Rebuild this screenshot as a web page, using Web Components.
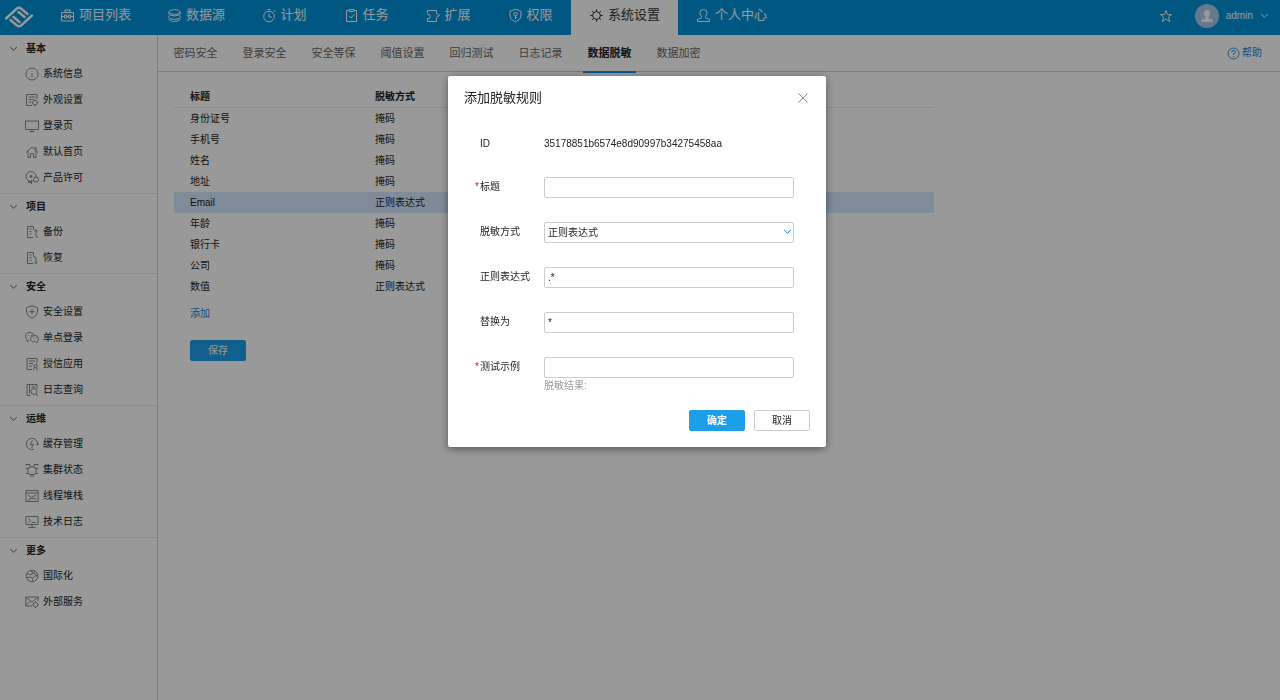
<!DOCTYPE html>
<html lang="zh-CN">
<head>
<meta charset="utf-8">
<title>系统设置 - 数据脱敏</title>
<style>
html,body{margin:0;height:100%}
body{font:10px/20px "Liberation Sans","Noto Sans CJK SC",sans-serif;color:#222;background:#fff}
</style>
</head>
<body>
<settings-page></settings-page>
<script>
const ICONS = {
  logo: ['0 0 30 24', '<g stroke-width="2.400" stroke-linejoin="round" stroke-linecap="round"><path d="M2 13.500L12.800 3.700q2.200-1.900 4.400 0L23.500 9"/><path d="M28 10.500L17.200 20.300q-2.200 1.900-4.400 0L6.500 15"/><path d="M9.500 12l6 5M20.500 12l-6-5"/></g>'],
  projects: ['0 0 15 15', '<path d="M1.500 4.500h12v8.500h-12zM5 4.500V2h5v2.500M1.500 8.500h3m2 0h2m2 0h3M4.500 7v3h2V7zM8.500 7v3h2V7z"/>'],
  database: ['0 0 15 15', '<ellipse cx="7.500" cy="4" rx="5.500" ry="2.300"/><path d="M2 4q-1 2 1 3 4.500 2 9 0 2-1 1-3M2 7.500q-1 2 1 3 4.500 2 9 0 2-1 1-3M2 10.500v1q2 2 5.500 2t5.500-2v-1"/>'],
  clock: ['0 0 15 15', '<circle cx="7" cy="8.500" r="5.300"/><path d="M7 5.500v3.500h3M5.500 1.500h3M11.500 2l2 2"/>'],
  task: ['0 0 15 15', '<path d="M5 2.500H2.500v11h10v-11H10M5 1.500h5v2H5zM5 8l2 2 3.500-4"/>'],
  extend: ['0 0 15 15', '<path d="M1.500 5.500V2.500h9v3l3 2-3 2v4h-9v-3h2q1.500-2 0-4h-2"/>'],
  rights: ['0 0 15 15', '<path d="M7.500 1.200l5.500 2v5q0 3.500-5.500 5.600Q2 11.700 2 8.200v-5z"/><circle cx="7.500" cy="6" r="1.700"/><path d="M7.500 7.700v3.500m0-1.700h1.500"/>'],
  gear: ['0 0 15 15', '<circle cx="7.500" cy="7.500" r="3.900"/><path d="M7.500 1.300v2.300M7.500 11.400v2.300M1.300 7.500h2.300M11.400 7.500h2.300M3.100 3.100l1.600 1.600M10.300 10.300l1.600 1.600M3.100 11.900l1.600-1.600M10.300 4.700l1.600-1.600"/>'],
  person: ['0 0 15 15', '<path d="M5.500 8.500Q4 7 4 4.700 4 1.500 7.500 1.500T11 4.700q0 2.300-1.500 3.800v1.300l4 1.700v2h-12v-2l4-1.700z"/>'],
  star: ['0 0 15 15', '<path d="M7.500 1.500l1.600 4.500h4.400l-3.500 2.700 1.500 4.800-4-2.900-4 2.900L5 8.700 1.500 6h4.400z"/>'],
  down: ['0 0 9 9', '<path d="M1.200 3l3.300 3.300L7.800 3"/>'],
  close: ['0 0 12 12', '<path d="M1.500 1.500l9 9m0-9l-9 9"/>'],
  help: ['0 0 15 15', '<circle cx="7.500" cy="7.500" r="6.300"/><path d="M5.500 6q0-2.200 2-2.200T9.500 6q0 1.300-2 2v1.300M7.500 10.500v1.200"/>'],
  info: ['0 0 14 14', '<circle cx="7" cy="7" r="6"/><path d="M7 6v4.500M7 3.500v1.200"/>'],
  look: ['0 0 14 14', '<path d="M7 12.500H1.500v-11h10.500V6M3.500 4h7M3.500 6.500h5M3.500 9h3"/><circle cx="10" cy="9.700" r="2.300"/><path d="M10 6.500v1M10 12v1.200M7 9.700h.8M12.300 9.700h1"/>'],
  screen: ['0 0 14 14', '<path d="M.5 2h13v8.500H.5zM7 10.500v2M4.500 12.500h5"/>'],
  home: ['0 0 14 14', '<path d="M1 7.500l6-5.500 6 5.500M3 6v6.500h2.500V8.500h3v4H11V6M11 5.500V2.500H9.500"/>'],
  license: ['0 0 14 14', '<circle cx="6" cy="5.500" r="5"/><circle cx="6" cy="5.500" r="1" fill="currentColor"/><circle cx="11" cy="8.500" r="2.500" fill="#fff"/><path d="M3.500 10v1.500h3M6.500 9v4"/>'],
  backup: ['0 0 14 14', '<path d="M8.500 5V1.500h-6v11h6M4.500 4h2M4.500 6.500h2M4.500 9h2M9.500 6.500l1.500-2 1.500 2M11 5v6q0 1.500 2 1.500"/>'],
  restore: ['0 0 14 14', '<path d="M8.500 5V1.500h-6v11h6M4.500 4h2M4.500 6.500h2M4.500 9h2M8.500 5.500q2.500 0 2.500 2v5M9.500 11l1.500 1.700L12.500 11"/>'],
  shield: ['0 0 14 14', '<path d="M7 .8l5.500 1.700V7q0 4-5.500 6.200Q1.500 11 1.500 7V2.500zM7 4v5.500M4.200 6.700h5.600"/>'],
  wechat: ['0 0 14 14', '<path d="M4 9.500l-2 1V8.500Q.5 7 .5 5.200q0-3.700 4.200-3.700 3.500 0 4.300 3M3.500 4.500h.7M6 4.500h.7"/><path d="M9.500 4.500q4 0 4 3.200 0 1.700-1.300 2.500v1.500l-1.500-.9q-5 .7-5.200-3.100 0-3.200 4-3.200M8 7h.7M10.500 7h.7"/>'],
  trust: ['0 0 14 14', '<path d="M7 12.500H2v-11h10v5M4 4h6M4 6.500h4M4 9h3"/><circle cx="10.500" cy="9" r="1.700"/><path d="M9.500 10.500l-1 2.700M11.500 10.500l1 2.700"/>'],
  logs: ['0 0 14 14', '<path d="M5.500 12.500H2v-11h10v4M4.500 1.500v9M6.500 4h4"/><circle cx="9" cy="8.500" r="3"/><path d="M11 11l2 2"/>'],
  cache: ['0 0 14 14', '<path d="M9 12.300A5.700 5.700 0 1 1 12.700 7.500M11 6.500l1.700 1.500L14 6.500M7.500 3.500L5 7.500h3.500L6.500 11"/>'],
  cluster: ['0 0 14 14', '<rect x="3" y="4" width="8" height="7.500" rx="2"/><path d="M.5 1.500h4.500V4M13.500 1.500H9V4M.5 5.500h2.500M11 5.500h2.500M1 10.500h2M11 10.500h2M5 13h4"/>'],
  thread: ['0 0 14 14', '<path d="M1 1.500h12v11H1zM1 4h12M3 6l3 2.500L11 6M3 11q3-3 8-1"/>'],
  tech: ['0 0 14 14', '<path d="M1 1.500h12v8H1zM7 9.500v3M3.500 12.500h7M3.500 3.500l2 2-2 2M6.500 7.500h4"/>'],
  globe: ['0 0 14 14', '<circle cx="7" cy="7" r="5.800"/><path d="M2 4q4 4 8-2M8 13q-2-5 4.500-7M1.500 9q4-2 6 0M5 1.500q4 2 8 7"/>'],
  service: ['0 0 14 14', '<path d="M7 11H.8V2h12.400v4M1 2.500l6 4.500 6-4.500M1 10.500l4-4"/><circle cx="10.500" cy="9.700" r="2.300"/><path d="M10.500 6.500v1M10.500 12v1.200M7.500 9.700h.7M12.800 9.700h1"/>']
};
class Base extends HTMLElement {
  render(css, html) {
    this.attachShadow({mode: 'open'}).innerHTML = `<style>*{box-sizing:border-box}${css}</style>${html}`;
  }
}
customElements.define('ui-icon', class extends Base {
  connectedCallback() {
    const [box, art] = ICONS[this.getAttribute('name')];
    this.render(':host{display:block;flex:none;width:var(--size,14px);height:var(--size,14px)}svg{display:block;width:100%;height:100%;fill:none;stroke:currentColor}',
      `<svg viewBox="${box}" aria-hidden="true">${art}</svg>`);
  }
});
customElements.define('nav-item', class extends Base {
  connectedCallback() {
    this.render(`:host{display:block}
      a{display:flex;align-items:center;justify-content:center;gap:4px;height:35px;min-width:82px;padding:0 18px 5px;color:#fff;text-decoration:none;font-size:13px;white-space:nowrap}
      :host([active]) a{background:#fff;color:#333}
      ui-icon{--size:15px}`,
      `<a href="#"><ui-icon name="${this.getAttribute('icon')}"></ui-icon><slot></slot></a>`);
  }
});
customElements.define('top-bar', class extends Base {
  connectedCallback() {
    this.render(`:host{display:flex;height:35px;background:#0093d9;color:#fff}
      .logo{width:42px;padding:5px 0 0 4px;color:inherit}.logo ui-icon{width:30px;height:24px}
      nav{display:flex;flex:1}
      .user{display:flex;align-items:center;padding:0 11px 4px 0}
      button{all:unset;display:flex;align-items:center;gap:7px;cursor:pointer}
      .fav{margin-right:22px}.fav ui-icon{--size:14px}
      .down{--size:9px}
      .face{width:24px;height:24px;fill:#a8c8ec}`,
      `<a class="logo" href="#" aria-label="首页"><ui-icon name="logo"></ui-icon></a>
      <nav><nav-item icon="projects">项目列表</nav-item><nav-item icon="database">数据源</nav-item><nav-item icon="clock">计划</nav-item><nav-item icon="task">任务</nav-item><nav-item icon="extend">扩展</nav-item><nav-item icon="rights">权限</nav-item><nav-item icon="gear" active>系统设置</nav-item><nav-item icon="person">个人中心</nav-item></nav>
      <div class="user"><button class="fav" aria-label="收藏"><ui-icon name="star"></ui-icon></button>
      <button><svg class="face" viewBox="0 0 24 24" aria-hidden="true"><circle cx="12" cy="12" r="12"/><path fill="#fff" d="M9 9q0-3 3-3t3 3q0 3-1.500 4v1.500l3.500 1q.5.500.5 2.500h-11q0-2 .5-2.500l3.500-1V13Q9 12 9 9z"/></svg><span>admin</span><ui-icon class="down" name="down"></ui-icon></button></div>`);
  }
});
customElements.define('side-group', class extends Base {
  connectedCallback() {
    const items = this.getAttribute('items').split(' ').map(s => s.split(':'));
    this.render(`:host{display:block;padding-bottom:2px;border-bottom:1px solid #ebebeb}
      :host(:last-of-type){border-bottom:0}
      button{all:unset;display:flex;align-items:center;gap:8px;height:25px;padding-left:9px;font-weight:bold;cursor:pointer;color:#222}
      button ui-icon{--size:9px;color:#567}
      ul{list-style:none;margin:0;padding:0}
      a{display:flex;align-items:center;gap:4px;height:26px;padding-left:25px;color:#222;text-decoration:none}
      a ui-icon{color:#888}`,
      `<button aria-expanded="true"><ui-icon name="down"></ui-icon><span><slot></slot></span></button>
      <ul>${items.map(([i, t]) => `<li><a href="#"><ui-icon name="${i}"></ui-icon>${t}</a></li>`).join('')}</ul>`);
  }
});
customElements.define('side-nav', class extends Base {
  connectedCallback() {
    this.render(':host{display:block;width:158px;flex:none;padding-top:1px;border-right:1px solid #d0d0d0}',
      `<side-group items="info:系统信息 look:外观设置 screen:登录页 home:默认首页 license:产品许可">基本</side-group><side-group items="backup:备份 restore:恢复">项目</side-group><side-group items="shield:安全设置 wechat:单点登录 trust:授信应用 logs:日志查询">安全</side-group><side-group items="cache:缓存管理 cluster:集群状态 thread:线程堆栈 tech:技术日志">运维</side-group><side-group items="globe:国际化 service:外部服务">更多</side-group>`);
  }
});
customElements.define('tab-bar', class extends Base {
  connectedCallback() {
    const tabs = ['密码安全', '登录安全', '安全等保', '阈值设置', '回归测试', '日志记录', '数据脱敏', '数据加密'];
    this.render(`:host{display:flex;justify-content:space-between;height:37px;padding:0 18px 0 11px;border-bottom:1px solid #d0d0d0}
      nav{display:flex;gap:16px}
      a{display:flex;align-items:center;justify-content:center;min-width:53px;height:38px;border-bottom:2px solid transparent;font-size:11px;color:#666;text-decoration:none}
      a.on{color:#222;font-weight:bold;border-color:#1390ee}
      .help{font-size:10px;min-width:0;gap:2px;color:#1a7fd8}.help ui-icon{--size:13px}`,
      `<nav>${tabs.map(t => `<a href="#"${t === '数据脱敏' ? ' class="on" aria-current="page"' : ''}>${t}</a>`).join('')}</nav>
      <a class="help" href="#"><ui-icon name="help"></ui-icon>帮助</a>`);
  }
});
customElements.define('ui-button', class extends Base {
  connectedCallback() {
    this.render(`:host{display:block}
      button{display:block;width:56px;height:21px;padding:0;border:1px solid #ccc;border-radius:2px;background:#fff;color:#222;font:inherit;line-height:19px}
      :host([primary]) button{background:#1c9fe9;border-color:#1c9fe9;color:#fff}
      :host([strong]) button{font-weight:bold}`,
      '<button type="button"><slot></slot></button>');
  }
});
customElements.define('rule-table', class extends Base {
  connectedCallback() {
    const rows = [['身份证号', '掩码'], ['手机号', '掩码'], ['姓名', '掩码'], ['地址', '掩码'], ['Email', '正则表达式'], ['年龄', '掩码'], ['银行卡', '掩码'], ['公司', '掩码'], ['数值', '正则表达式']];
    this.render(`:host{display:block}
      table{width:100%;max-width:760px;border-collapse:separate;border-spacing:0;table-layout:fixed}
      th,td{height:21px;padding:0 16px;text-align:left;line-height:20px}
      th{border-bottom:1px solid #ebebeb}
      th:first-child{width:185px}
      .on td{background:#d4e8ff}`,
      `<table><thead><tr><th>标题</th><th>脱敏方式</th></tr></thead><tbody>${rows.map(r => `<tr${r[0] === 'Email' ? ' class="on"' : ''}><td>${r[0]}</td><td>${r[1]}</td></tr>`).join('')}</tbody></table>`);
  }
});
customElements.define('form-field', class extends Base {
  connectedCallback() {
    const at = n => this.getAttribute(n);
    const control = {
      text: `<input id="c" type="text" value="${at('value') || ''}">`,
      select: `<select id="c"><option>${at('value')}</option></select><ui-icon name="down"></ui-icon>`,
      output: `<output id="c">${at('value')}</output>`
    }[at('kind') || 'text'];
    this.render(`:host{display:grid;grid-template-columns:64px 1fr;height:21px}
      :host([kind=output]){line-height:24px}
      label{position:relative;white-space:nowrap}
      :host([required]) label::before{content:"*";position:absolute;right:100%;color:#f00;padding-right:1px}
      .box{position:relative}
      output{display:block}
      input,select{display:block;width:100%;height:21px;margin:0;padding:0 3px;border:1px solid #ccc;border-radius:2px;background:#fff;color:#222;font:inherit;line-height:18px;appearance:none;outline:0}
      ui-icon{--size:9px;position:absolute;right:2px;top:5px;color:#1a7fd8;pointer-events:none}`,
      `<label for="c">${at('label')}</label><div class="box">${control}</div>`);
  }
});
customElements.define('modal-dialog', class extends Base {
  connectedCallback() {
    this.render(`:host{position:fixed;inset:0;display:flex;justify-content:center;align-items:flex-start;padding:76px 6px 0 0;background:rgba(0,0,0,.4);box-sizing:border-box}
      section{width:378px;background:#fff;border-radius:2px;box-shadow:0 2px 8px rgba(0,0,0,.45)}
      header{display:flex;justify-content:space-between;align-items:center;padding:12px 17px 0 16px}
      h2{margin:0;font-size:13px;font-weight:normal;line-height:20px}
      header button{all:unset;color:#888;cursor:pointer}header ui-icon{--size:12px}
      .body{display:grid;gap:24px;padding:24px 32px 0}
      .hint{color:#999;line-height:16px;padding-left:96px}
      footer{display:flex;justify-content:flex-end;gap:9px;padding:16px}`,
      `<section role="dialog" aria-modal="true" aria-labelledby="t"><header><h2 id="t">添加脱敏规则</h2><button aria-label="关闭"><ui-icon name="close"></ui-icon></button></header>
      <div class="body"><slot></slot></div><div class="hint"><slot name="hint"></slot></div>
      <footer><ui-button primary strong>确定</ui-button><ui-button>取消</ui-button></footer></section>`);
  }
});
customElements.define('settings-page', class extends Base {
  connectedCallback() {
    this.render(`:host{display:flex;flex-direction:column;min-height:100vh}
      .row{display:flex;flex:1}
      main{flex:1;min-width:0}
      .content{padding:15px 16px}
      .add{display:inline-block;margin:7px 16px 16px;color:#1a7fd8;text-decoration:none}
      .save{padding-left:16px}`,
      `<top-bar></top-bar><div class="row"><side-nav></side-nav><main><tab-bar></tab-bar>
      <div class="content"><rule-table></rule-table><a class="add" href="#">添加</a><div class="save"><ui-button primary>保存</ui-button></div></div></main></div>
      <modal-dialog>
        <form-field kind="output" label="ID" value="35178851b6574e8d90997b34275458aa"></form-field>
        <form-field required label="标题"></form-field>
        <form-field kind="select" label="脱敏方式" value="正则表达式"></form-field>
        <form-field label="正则表达式" value=".*"></form-field>
        <form-field label="替换为" value="*"></form-field>
        <form-field required label="测试示例"></form-field>
        <span slot="hint">脱敏结果:</span>
      </modal-dialog>`);
  }
});
</script>
</body>
</html>
